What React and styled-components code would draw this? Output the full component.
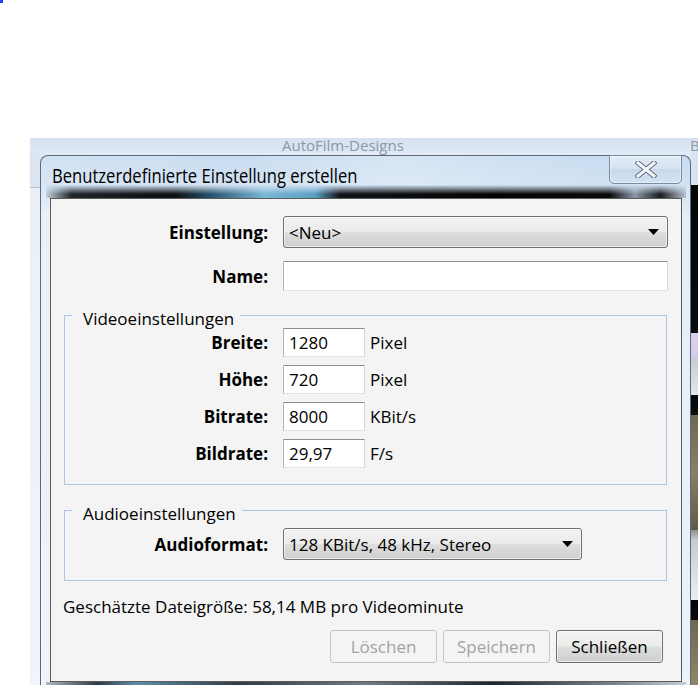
import styled, { createGlobalStyle } from "styled-components";

const UI_FONT = `"Segoe UI", "Open Sans", "Noto Sans", sans-serif`;

const GlobalStyle = createGlobalStyle`
  *, *::before, *::after {
    box-sizing: border-box;
  }
  html, body {
    margin: 0;
    padding: 0;
    background: #fff;
  }
  body {
    font-family: ${UI_FONT};
    font-size: 17px;
    color: #000;
  }
`;

const Page = styled.div`
  width: 698px;
  height: 685px;
  overflow: hidden;
  display: flex;
  flex-direction: column;
`;

const Dot = styled.span`
  display: block;
  width: 3px;
  height: 3px;
  background: #2b3dff;
`;

const BackWindow = styled.div`
  flex: 1;
  min-height: 0;
  margin: 135px 0 0 30px;
  display: flex;
  flex-direction: column;
  background: #e2eaf5;
`;

const Ribbon = styled.div`
  height: 14px;
  flex-shrink: 0;
  display: flex;
  background: linear-gradient(#d5e1f1, #dde7f4);
  color: #8997ab;
  font-size: 15px;
  line-height: 14px;
  white-space: nowrap;
`;

const RibbonCell = styled.div`
  width: ${(p) => (p.$w ? `${p.$w}px` : "auto")};
  flex: ${(p) => (p.$w ? "none" : 1)};
  padding-left: ${(p) => p.$pad || 0}px;
`;

const Tick = styled.span`
  width: 1px;
  height: 6px;
  margin-top: 2px;
  background: #f4f7fb;
  box-shadow: 1px 0 0 #b9c6d6;
`;

const Desk = styled.div`
  flex: 1;
  min-height: 0;
  display: flex;
`;

const LeftEdge = styled.div`
  width: 10px;
  background: linear-gradient(
    to bottom,
    #dbe5f2 0,
    #dbe5f2 35px,
    #b5c0cd 35px,
    #b5c0cd 36px,
    #ebf0f6 36px,
    #f1f4f8 100%
  );
`;

const RightEdge = styled.div`
  flex: 1;
  background: linear-gradient(
    to bottom,
    #d9e4f2 0,
    #d9e4f2 33px,
    #050505 33px,
    #0b0b0b 181px,
    #d9d0ec 181px,
    #d5cce8 206px,
    #c9cdd2 206px,
    #e3e6ea 243px,
    #060606 243px,
    #101010 263px,
    #6f6a55 263px,
    #8a7f62 320px,
    #5f5a48 378px,
    #8d8f92 378px,
    #c8cacc 388px,
    #eceef0 448px,
    #050505 448px,
    #0a0a0a 468px,
    #6d6852 468px,
    #8f8666 533px
  );
`;

const Dialog = styled.section`
  width: 651px;
  margin-top: 3px;
  display: flex;
  flex-direction: column;
  padding: 0 8px 0 9px;
  border: 1px solid #5a6b80;
  border-bottom: 0;
  border-radius: 8px 8px 0 0;
  background: linear-gradient(
      to right,
      rgba(255, 255, 255, 0.15),
      rgba(255, 255, 255, 0) 30%,
      rgba(255, 255, 255, 0.25) 55%,
      rgba(255, 255, 255, 0) 85%
    ),
    linear-gradient(to bottom, #c9dcf0 0, #d2e2f3 30px, #e6eef8 60px, #edf2f8 100%);
`;

const TitleBar = styled.header`
  height: 29px;
  display: flex;
  justify-content: space-between;
  align-items: flex-start;
`;

const Title = styled.h1`
  margin: 8px 0 0 2px;
  font-size: 20px;
  line-height: 24px;
  font-weight: 400;
  white-space: nowrap;
  transform: scaleX(0.83);
  transform-origin: left center;
`;

const CloseButton = styled.button`
  width: 73px;
  height: 29px;
  margin: -1px 0 0 0;
  padding: 0;
  display: flex;
  align-items: center;
  justify-content: center;
  border: 1px solid #7a8a9e;
  border-radius: 0 0 5px 5px;
  background: linear-gradient(#e4edf8 0, #d6e3f1 45%, #c8d9ec 50%, #d3e2f2 100%);
  box-shadow: inset 0 0 0 1px rgba(255, 255, 255, 0.45);
`;

const GlassBand = styled.div`
  height: 13px;
  margin: 0 -4px;
  background: linear-gradient(
      to bottom,
      rgba(210, 226, 243, 1) 0,
      rgba(210, 226, 243, 0) 70%
    ),
    linear-gradient(
      to right,
      #c5d2df 0,
      #20252b 4%,
      #0c0e10 20%,
      #2a5670 26%,
      #79b7d6 34%,
      #5aa0c4 42%,
      #101418 46%,
      #050505 70%,
      #0a0a0a 88%,
      #8a97a6 92%,
      #1b1e22 96%,
      #b7c3d0 100%
    );
`;

const Client = styled.div`
  display: flex;
  flex-direction: column;
  padding: 17px 13px 18px 12px;
  border: 1px solid #5b5b5b;
  background: #f4f4f4;
`;

const BottomGlass = styled.div`
  flex: 1;
  margin: 0 -4px;
  background: linear-gradient(
    to right,
    #aeb9c4 0,
    #2c3a44 8%,
    #5d8fa8 14%,
    #2e3b46 30%,
    #6d7c88 50%,
    #1c242c 70%,
    #7e8c99 90%,
    #c3ccd6 100%
  );
`;

const Row = styled.div`
  display: flex;
  align-items: center;
  margin-top: ${(p) => p.$top || 0}px;
`;

const Label = styled.label`
  width: ${(p) => p.$w}px;
  flex-shrink: 0;
  margin-right: 15px;
  text-align: right;
  font-weight: 700;
  white-space: nowrap;
`;

const Select = styled.div`
  width: ${(p) => (p.$w ? `${p.$w}px` : "auto")};
  flex: ${(p) => (p.$w ? "none" : 1)};
  height: 32px;
  display: flex;
  align-items: center;
  justify-content: space-between;
  padding: 0 8px 0 5px;
  border: 1px solid #707070;
  border-radius: 3px;
  background: linear-gradient(#f2f2f2 0, #ebebeb 48%, #dddddd 52%, #cfcfcf 100%);
  box-shadow: inset 0 0 0 1px rgba(255, 255, 255, 0.6);
  white-space: nowrap;
`;

const TextBox = styled.div`
  width: ${(p) => (p.$w ? `${p.$w}px` : "auto")};
  flex: ${(p) => (p.$w ? "none" : 1)};
  height: ${(p) => p.$h || 29}px;
  display: flex;
  align-items: center;
  padding: 0 5px;
  border: 1px solid;
  border-color: #8e8f8f #d6d6d6 #e3e3e3 #b5b5b5;
  background: #fff;
`;

const Unit = styled.span`
  margin-left: 5px;
`;

const Group = styled.fieldset`
  min-width: 0;
  margin: ${(p) => p.$top}px 1px 0;
  padding: 0 0 ${(p) => p.$bottom}px;
  border: 1px solid #adc4e6;
`;

const Legend = styled.legend`
  margin-left: 7px;
  padding: 8px 6px 0 11px;
  line-height: 18px;
`;

const GroupRows = styled.div`
  display: flex;
  flex-direction: column;
  gap: 8px;
  padding-top: ${(p) => p.$top || 0}px;
`;

const Estimate = styled.p`
  margin: 16px 0 0;
  line-height: 20px;
`;

const ButtonBar = styled.div`
  display: flex;
  justify-content: flex-end;
  gap: 6px;
  margin: 13px 5px 0 0;
`;

const Button = styled.button`
  width: 107px;
  height: 33px;
  padding: 0;
  font-family: ${UI_FONT};
  font-size: 17px;
  border-radius: 3px;
  border: 1px solid ${(p) => (p.disabled ? "#c2c5c8" : "#707070")};
  color: ${(p) => (p.disabled ? "#a3a3a3" : "#000")};
  background: ${(p) =>
    p.disabled
      ? "#f4f4f4"
      : "linear-gradient(#f2f2f2 0, #ebebeb 48%, #dddddd 52%, #cfcfcf 100%)"};
  box-shadow: ${(p) => (p.disabled ? "none" : "inset 0 0 0 1px rgba(255,255,255,0.6)")};
`;

function CloseGlyph() {
  return (
    <svg width="22" height="17" viewBox="0 0 22 17">
      <path d="M3 2 L19 15 M19 2 L3 15" stroke="#5f6d7c" strokeWidth="5" strokeLinecap="square" />
      <path d="M3 2 L19 15 M19 2 L3 15" stroke="#f4f7fa" strokeWidth="3" strokeLinecap="square" />
    </svg>
  );
}

function Arrow() {
  return (
    <svg width="11" height="6" viewBox="0 0 11 6">
      <path d="M0 0 H11 L5.5 6 Z" fill="#000" />
    </svg>
  );
}

const videoFields = [
  { label: "Breite:", value: "1280", unit: "Pixel" },
  { label: "Höhe:", value: "720", unit: "Pixel" },
  { label: "Bitrate:", value: "8000", unit: "KBit/s" },
  { label: "Bildrate:", value: "29,97", unit: "F/s" },
];

export default function App() {
  return (
    <>
      <GlobalStyle />
      <Page>
        <Dot />
        <BackWindow>
          <Ribbon>
            <RibbonCell $w={86} />
            <Tick />
            <RibbonCell $w={339} $pad={166}>
              AutoFilm-Designs
            </RibbonCell>
            <Tick />
            <RibbonCell $pad={235}>B</RibbonCell>
          </Ribbon>
          <Desk>
            <LeftEdge />
            <Dialog>
              <TitleBar>
                <Title>Benutzerdefinierte Einstellung erstellen</Title>
                <CloseButton aria-label="Schließen">
                  <CloseGlyph />
                </CloseButton>
              </TitleBar>
              <GlassBand />
              <Client>
                <Row>
                  <Label $w={205}>Einstellung:</Label>
                  <Select>
                    <span>&lt;Neu&gt;</span>
                    <Arrow />
                  </Select>
                </Row>
                <Row $top={13}>
                  <Label $w={205}>Name:</Label>
                  <TextBox $h={30} />
                </Row>

                <Group $top={11} $bottom={16}>
                  <Legend>Videoeinstellungen</Legend>
                  <GroupRows>
                    {videoFields.map((f) => (
                      <Row key={f.label}>
                        <Label $w={203}>{f.label}</Label>
                        <TextBox $w={82}>{f.value}</TextBox>
                        <Unit>{f.unit}</Unit>
                      </Row>
                    ))}
                  </GroupRows>
                </Group>

                <Group $top={12} $bottom={20}>
                  <Legend>Audioeinstellungen</Legend>
                  <GroupRows $top={5}>
                    <Row>
                      <Label $w={203}>Audioformat:</Label>
                      <Select $w={299}>
                        <span>128 KBit/s, 48 kHz, Stereo</span>
                        <Arrow />
                      </Select>
                    </Row>
                  </GroupRows>
                </Group>

                <Estimate>Geschätzte Dateigröße: 58,14 MB pro Videominute</Estimate>

                <ButtonBar>
                  <Button disabled>Löschen</Button>
                  <Button disabled>Speichern</Button>
                  <Button>Schließen</Button>
                </ButtonBar>
              </Client>
              <BottomGlass />
            </Dialog>
            <RightEdge />
          </Desk>
        </BackWindow>
      </Page>
    </>
  );
}
